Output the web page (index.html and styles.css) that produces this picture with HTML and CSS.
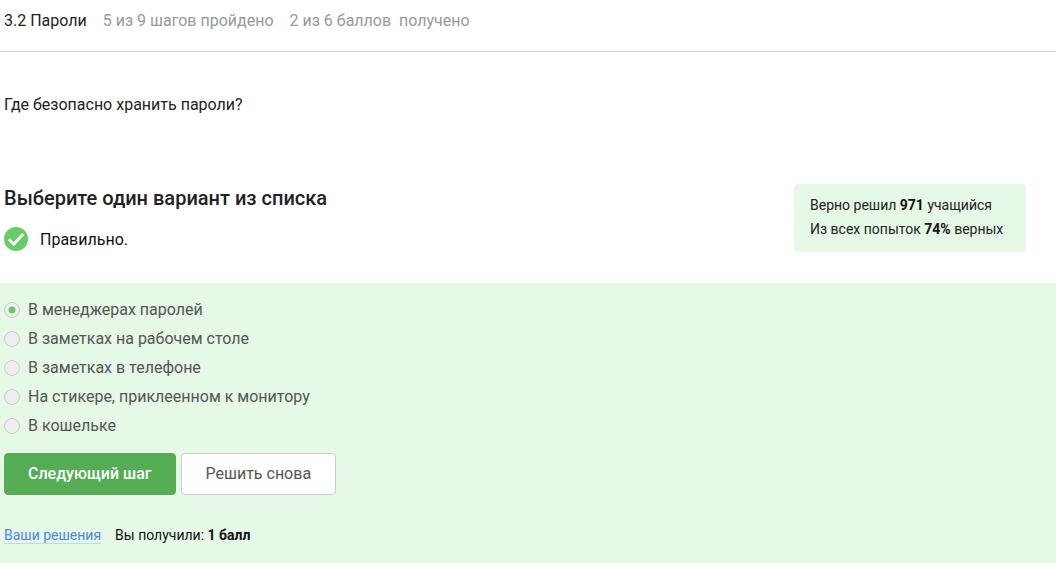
FILE: index.html
```html
<!DOCTYPE html>
<html lang="ru">
<head>
<meta charset="utf-8">
<meta name="viewport" content="width=device-width, initial-scale=1">
<title>3.2 Пароли</title>
<link rel="stylesheet" href="styles.css">
</head>
<body>
<header class="topbar">
  <span class="lesson">3.2 Пароли</span>
  <span>5 из 9 шагов пройдено</span>
  <span class="score">2 из 6 баллов&nbsp; получено</span>
</header>
<main class="step">
  <p class="question">Где безопасно хранить пароли?</p>
  <section class="summary">
    <div class="result">
      <h2 class="title" id="quiz-title">Выберите один вариант из списка</h2>
      <p class="status">
        <svg class="check" viewBox="0 0 24 24" aria-hidden="true"><circle cx="12" cy="12" r="12" fill="#66cc66"/><path d="M4.800 12.300l5 5L19.300 6.800" fill="none" stroke="#fff" stroke-width="2.800"/></svg>
        <span>Правильно.</span>
      </p>
    </div>
    <aside class="stats">
      <p>Верно решил <b>971</b> учащийся</p>
      <p>Из всех попыток <b>74%</b> верных</p>
    </aside>
  </section>
  <form class="quiz">
    <div class="options" role="radiogroup" aria-labelledby="quiz-title">
      <label class="option"><input type="radio" name="answer" checked><span>В менеджерах паролей</span></label>
      <label class="option"><input type="radio" name="answer"><span>В заметках на рабочем столе</span></label>
      <label class="option"><input type="radio" name="answer"><span>В заметках в телефоне</span></label>
      <label class="option"><input type="radio" name="answer"><span>На стикере, приклеенном к монитору</span></label>
      <label class="option"><input type="radio" name="answer"><span>В кошельке</span></label>
    </div>
    <div class="actions">
      <button class="button primary" type="button">Следующий шаг</button>
      <button class="button" type="button">Решить снова</button>
    </div>
    <p class="footer">
      <a class="link" href="#solutions">Ваши решения</a>
      <span>Вы получили: <b>1 балл</b></span>
    </p>
  </form>
</main>
</body>
</html>
```
FILE: styles.css
```css
* { box-sizing: border-box; }
body {
  margin: 0;
  min-height: 100vh;
  display: flex;
  flex-direction: column;
  background: #fff;
  color: #222;
  font: 16px/24px Roboto, sans-serif;
}
p, h2 { margin: 0; }
.topbar {
  display: flex;
  flex-wrap: wrap;
  gap: 0 16px;
  padding: 9px 4px 18px;
  border-bottom: 1px solid #d8d8d8;
  color: #999;
}
.lesson { color: #222; }
.step {
  flex: 1;
  display: flex;
  flex-direction: column;
}
.question { padding: 41px 4px 67px; }
.summary {
  display: flex;
  justify-content: space-between;
  align-items: flex-start;
  gap: 16px;
  padding: 0 30px 30px 4px;
}
.title {
  padding-top: 2px;
  font-size: 20px;
  font-weight: 500;
  line-height: 24px;
}
.status {
  display: flex;
  align-items: flex-start;
  gap: 12px;
  margin-top: 17px;
  color: #111;
  line-height: 26px;
}
.check { width: 24px; height: 24px; }
.stats {
  min-width: 232px;
  padding: 9px 16px 11px;
  border-radius: 4px;
  background: #e6f8e6;
  color: #222;
  font-size: 14px;
}
.stats b { color: #111; }
.quiz {
  flex: 1;
  padding: 12px 4px 16px;
  background: #e6f8e6;
}
.options {
  display: flex;
  flex-direction: column;
  align-items: flex-start;
  color: #555;
}
.option {
  display: flex;
  align-items: center;
  gap: 8px;
  min-height: 29px;
}
.option input {
  appearance: none;
  width: 16px;
  height: 16px;
  margin: 0;
  border: 1px solid #ccc;
  border-radius: 50%;
  background: #eee;
}
.option input:checked {
  background: radial-gradient(circle, #66cc66 3px, #eee 4px);
}
.actions {
  display: flex;
  flex-wrap: wrap;
  gap: 5px;
  margin-top: 13px;
}
.button {
  padding: 8px 24px;
  border: 1px solid #ccc;
  border-radius: 4px;
  background: #fff;
  color: #555;
  font: inherit;
}
.primary {
  padding: 8px 23px;
  border-color: #54ad54;
  background: #54ad54;
  color: #fff;
  font-weight: 500;
}
.footer {
  display: flex;
  flex-wrap: wrap;
  align-items: center;
  gap: 14px;
  margin-top: 28px;
  color: #111;
  font-size: 14px;
}
.link {
  border-bottom: 1px solid #b9dcf5;
  color: #4d86f0;
  line-height: 16px;
  text-decoration: none;
}
```
